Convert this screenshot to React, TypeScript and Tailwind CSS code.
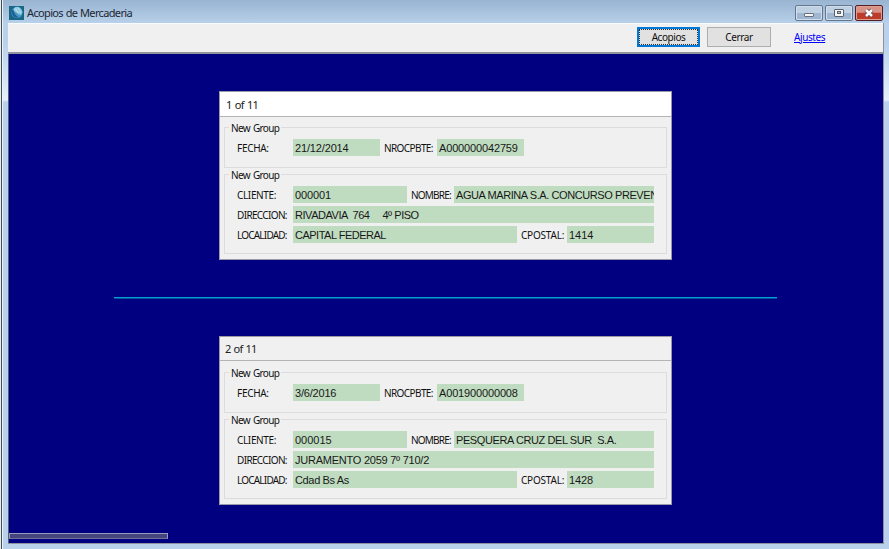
import type { ReactNode } from "react";

type Entry = { text: string; tracking: string };

type RecordData = {
  position: Entry;
  fecha: Entry;
  comprobante: Entry;
  cliente: Entry;
  nombre: Entry;
  direccion: Entry;
  localidad: Entry;
  postal: Entry;
  active?: boolean;
};

function Label({ children, className }: { children: string; className: string }) {
  return (
    <span
      className={`h-[17px] shrink-0 whitespace-pre font-['Noto_Sans',sans-serif] text-[10px] leading-[18px] text-[#101010] ${className}`}
    >
      {children}
    </span>
  );
}

function Field({ entry, className }: { entry: Entry; className: string }) {
  return (
    <div
      className={`h-[17px] shrink-0 overflow-hidden whitespace-pre bg-[#c0dcc0] pl-[2px] font-['Liberation_Sans',Arial,sans-serif] text-[11px] leading-[19px] text-[#181818] ${entry.tracking} ${className}`}
    >
      {entry.text}
    </div>
  );
}

function Group({ children, className }: { children: ReactNode; className: string }) {
  return (
    <section className={`mx-[4px] border border-[#dcdcdc] ${className}`}>
      <div className="-mt-[7px] ml-[4px] h-[14px] w-[52px] whitespace-nowrap bg-[#f0f0f0] pl-[2px] font-['Noto_Sans',sans-serif] text-[10px] leading-[14px] tracking-[-0.65px] [word-spacing:1px] text-[#101010]">
        New Group
      </div>
      {children}
    </section>
  );
}

function Card({ data }: { data: RecordData }) {
  return (
    <article className="h-[169px] w-[453px] border border-[#9a9aa6] bg-[#f0f0f0]">
      <header
        className={`border-b border-[#b4b4b4] font-['Noto_Sans',sans-serif] text-[11px] text-[#202020] [word-spacing:1px] ${data.position.tracking} ${data.active ? "mb-[10px] h-[25px] bg-white pl-[6px] leading-[26px]" : "mb-[11px] h-[24px] bg-[#f0f0f0] pl-[5px] leading-[24px]"}`}
      >
        {data.position.text}
      </header>
      <Group className="h-[41px]">
        <div className="mt-[4px] flex pl-[12px]">
          <Label className="w-[56px] tracking-[-0.3px]">FECHA:</Label>
          <Field className="w-[87px]" entry={data.fecha} />
          <Label className="w-[57px] pl-[4px] tracking-[-0.6px]">NROCPBTE:</Label>
          <Field className="w-[87px]" entry={data.comprobante} />
        </div>
      </Group>
      <Group className="mt-[6px] h-[80px]">
        <div className="mt-[4px] flex flex-col gap-[3px] pl-[12px]">
          <div className="flex">
            <Label className="w-[56px] tracking-[-0.35px]">CLIENTE:</Label>
            <Field className="w-[114px]" entry={data.cliente} />
            <Label className="w-[47px] pl-[4px] tracking-[-0.8px]">NOMBRE:</Label>
            <Field className="w-[200px]" entry={data.nombre} />
          </div>
          <div className="flex">
            <Label className="w-[56px] tracking-[-0.65px]">DIRECCION:</Label>
            <Field className="w-[361px]" entry={data.direccion} />
          </div>
          <div className="flex">
            <Label className="w-[56px] tracking-[-0.8px]">LOCALIDAD:</Label>
            <Field className="w-[224px]" entry={data.localidad} />
            <Label className="w-[50px] pl-[4px] tracking-[-0.2px]">CPOSTAL:</Label>
            <Field className="w-[87px]" entry={data.postal} />
          </div>
        </div>
      </Group>
    </article>
  );
}

const records: RecordData[] = [
  {
    position: { text: "1 of 11", tracking: "tracking-[-0.7px]" },
    active: true,
    fecha: { text: "21/12/2014", tracking: "tracking-[-0.15px]" },
    comprobante: { text: "A000000042759", tracking: "tracking-[-0.15px]" },
    cliente: { text: "000001", tracking: "tracking-[-0.1px]" },
    nombre: { text: "AGUA MARINA S.A. CONCURSO PREVEN", tracking: "tracking-[-0.42px]" },
    direccion: { text: "RIVADAVIA  764     4º PISO", tracking: "tracking-[-0.46px]" },
    localidad: { text: "CAPITAL FEDERAL", tracking: "tracking-[-0.5px]" },
    postal: { text: "1414", tracking: "tracking-normal" },
  },
  {
    position: { text: "2 of 11", tracking: "tracking-[-0.8px]" },
    fecha: { text: "3/6/2016", tracking: "tracking-[-0.2px]" },
    comprobante: { text: "A001900000008", tracking: "tracking-[-0.15px]" },
    cliente: { text: "000015", tracking: "tracking-normal" },
    nombre: { text: "PESQUERA CRUZ DEL SUR  S.A.", tracking: "tracking-[-0.41px]" },
    direccion: { text: "JURAMENTO 2059 7º 710/2", tracking: "tracking-[-0.24px]" },
    localidad: { text: "Cdad Bs As", tracking: "tracking-[-0.35px]" },
    postal: { text: "1428", tracking: "tracking-[-0.1px]" },
  },
];

function GlobeIcon() {
  return (
    <svg className="mt-[6px] h-[14px] w-[15px]" viewBox="0 0 15 14">
      <rect width="15" height="14" fill="#176787" />
      <circle cx="8" cy="6.5" r="5.5" fill="#4a9bc4" />
      <path d="M5 2Q9-1 12 3L13.500 6L12 9L9 8L7 6L4.500 5Z" fill="#8fc9e2" />
      <path d="M6 3L8 4M9 2.500L10.500 4M10.500 5.500L12 6.500M7.500 5.500L9.500 6.500" stroke="#d8eff6" strokeWidth=".8" />
      <path d="M3 4Q2 9 6 11.500L10 11.500Q5 9 4.500 4Z" fill="#1d5f98" />
    </svg>
  );
}

function WindowControls() {
  const base = "flex h-[16px] items-center justify-center rounded-[2px] border";
  const neutral =
    "w-[28px] border-[#63788f] bg-linear-to-b from-[#bfd0e3] from-50% to-[#9fb7d0] to-50% shadow-[inset_0_0_0_1px_#d0deec]";
  return (
    <div className="mt-[5px] flex gap-[2px]">
      <button aria-label="Minimizar" className={`${base} ${neutral}`}>
        <svg className="mt-px h-[10px] w-[12px]" viewBox="0 0 12 10">
          <rect x="1.500" y="4.500" width="9" height="3" rx=".5" fill="#f5f5f5" stroke="#6a717d" />
        </svg>
      </button>
      <button aria-label="Maximizar" className={`${base} ${neutral}`}>
        <svg className="h-[10px] w-[12px]" viewBox="0 0 12 10">
          <rect x="1.500" y="1.500" width="9" height="7" rx=".5" fill="#f5f5f5" stroke="#59616e" />
          <rect x="4.500" y="3.500" width="3" height="2" fill="#a9bfd6" stroke="#59616e" />
        </svg>
      </button>
      <button
        aria-label="Cerrar ventana"
        className={`${base} w-[28px] border-[#5a1c24] bg-linear-to-b from-[#d99386] from-45% to-[#bd3c29] to-50% shadow-[inset_0_0_0_1px_#dda092]`}
      >
        <svg className="h-[10px] w-[12px]" viewBox="0 0 12 10">
          <path d="M3 2L9 8M9 2L3 8" stroke="#65454e" strokeWidth="4.2" />
          <path d="M3 2L9 8M9 2L3 8" stroke="#fafafa" strokeWidth="2.5" />
        </svg>
      </button>
    </div>
  );
}

export default function App() {
  return (
    <div className="flex h-[549px] w-[889px] overflow-hidden bg-[#b9d1ea]">
      <div className="w-[3px] shrink-0 border-r border-l border-r-[#e8f4fb] border-l-[#e7ecef] bg-[#454b52]" />
      <div className="flex w-[886px] shrink-0 flex-col bg-linear-to-b from-[#99b4d1] to-[#b9d1ea] to-[24px]">
        <header className="flex h-[23px] shrink-0 justify-between pr-[6px] pl-[6px]">
          <div className="flex">
            <GlobeIcon />
            <h1 className="ml-[3px] font-['Noto_Sans',sans-serif] text-[11px] leading-[26px] tracking-[-0.65px] [word-spacing:0.5px] text-[#1c2734]">
              Acopios de Mercaderia
            </h1>
          </div>
          <WindowControls />
        </header>
        <div className="flex h-[526px] shrink-0">
          <div className="w-[5px] shrink-0 bg-linear-to-b from-[#b9d1ea] from-[20px] via-[#e4effa] via-[77px] to-[#b9d1ea] to-[79px]" />
          <div className="flex h-[521px] w-[876px] shrink-0 flex-col border-r border-b border-[#8d929c]">
            <nav className="flex h-[31px] shrink-0 border-t border-b-2 border-t-[#f8fbff] border-b-[#91949a] bg-[#f0f0f0] pl-[629px]">
              <button className="mt-[3px] h-[20px] w-[63px] border-2 border-[#0078d7] bg-[#e1e1e1] font-['Noto_Sans',sans-serif] text-[10px] leading-[16px] tracking-[-0.45px] text-[#101010] outline-1 -outline-offset-3 outline-dotted outline-[#303030]">
                Acopios
              </button>
              <button className="mt-[3px] ml-[7px] h-[20px] w-[64px] border border-[#adadad] bg-[#e1e1e1] font-['Noto_Sans',sans-serif] text-[10px] leading-[18px] tracking-[-0.35px] text-[#101010]">
                Cerrar
              </button>
              <a className="mt-[4px] ml-[23px] h-[18px] font-['Noto_Sans',sans-serif] text-[10px] leading-[18px] tracking-[-0.4px] text-[#0000ff] underline">
                Ajustes
              </a>
            </nav>
            <main className="flex h-[489px] flex-col border-l border-[#555d79] bg-[#000080]">
              <div className="mt-[37px] pl-[210px]">
                <Card data={records[0]} />
              </div>
              <div className="mt-[37px] ml-[105px] h-[2px] w-[663px] shrink-0 border-t border-[#00a0d0] bg-[#0050a0]" />
              <div className="mt-[37px] pl-[210px]">
                <Card data={records[1]} />
              </div>
              <div className="mt-[28px] h-[6px] w-[159px] shrink-0 border border-[#9a9abd] border-b-[#72729d] bg-[#46467e]" />
            </main>
          </div>
          <div className="w-[5px] shrink-0 bg-linear-to-b from-[#b9d1ea] from-[20px] via-[#e4effa] via-[77px] to-[#b9d1ea] to-[79px]" />
        </div>
      </div>
    </div>
  );
}
